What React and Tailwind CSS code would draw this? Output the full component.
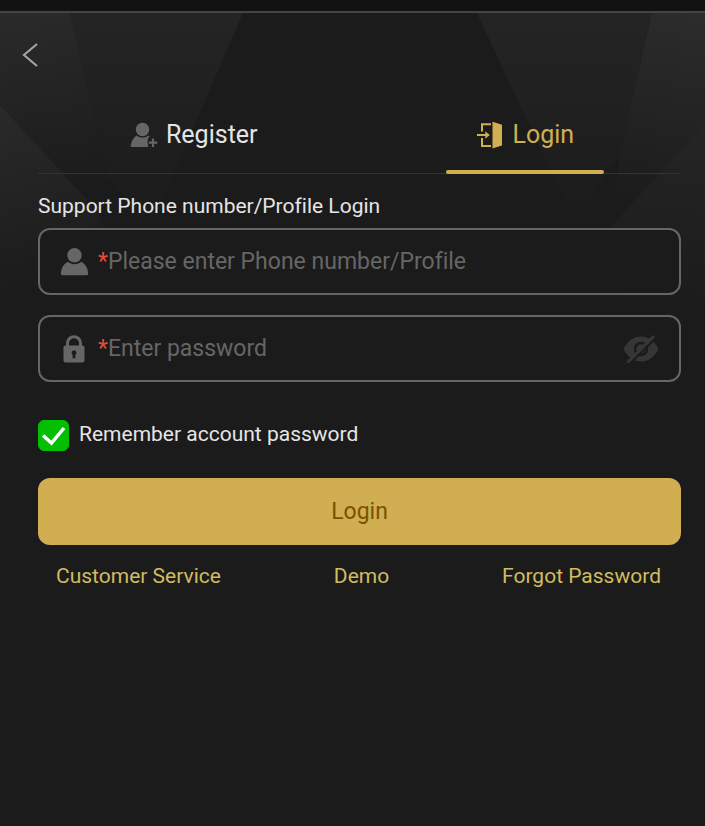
import React, { useState } from 'react';

const BackIcon = () => (
  <svg className="w-4 h-6" viewBox="0 0 16 24" fill="none" stroke="#a3a3a3" strokeWidth="2.2">
    <path d="M15 1L2 12l13 11" />
  </svg>
);

const RegisterIcon = () => (
  <svg className="w-7 h-7" viewBox="0 0 28 28" fill="#666666">
    <circle cx="12.5" cy="8.5" r="6.7" />
    <path d="M6.5 14.4c3.4 2.8 8.6 2.8 12 0l1.2 1.2c-1.6 1.4-2.3 3.2-2.2 5 .1 1.7.4 3.5.8 5.4H1.8c-.9 0-1.3-.6-1.1-1.5.6-4.300 2.500-7.600 5.800-10.100z" />
    <path d="M23 17.500v8.500M18.800 21.700h8.500" stroke="#666666" strokeWidth="2.200" />
  </svg>
);

const LoginIcon = () => (
  <svg className="w-7 h-7" viewBox="0 0 28 28">
    <path d="M15 3.200H6v7.300M6 17v8h9" fill="none" stroke="#d1ae52" strokeWidth="2" />
    <path d="M1 14h9" stroke="#d1ae52" strokeWidth="2" />
    <path d="M9.300 10.300l4.500 3.700-4.500 3.700z" fill="#d1ae52" />
    <path d="M16.500.8l9.500 3v20.800l-9.500 2.900z" fill="#d1ae52" />
  </svg>
);

const UserIcon = () => (
  <svg className="w-7 h-7 shrink-0" viewBox="0 0 28 28" fill="#666666">
    <circle cx="14.500" cy="7.300" r="7.200" />
    <path d="M7.600 13.800c4 3.200 9.800 3.200 13.800 0 4.200 2.600 6.500 6.400 6.700 11.400.1 1.300-.6 2-1.900 2H2.800c-1.300 0-2-.7-1.900-2 .2-5 2.500-8.800 6.700-11.400z" />
  </svg>
);

const LockIcon = () => (
  <svg className="w-7 h-7 shrink-0" viewBox="0 0 28 28">
    <path d="M7.500 12V8.200a6.500 6.500 0 0 1 13 0V12" fill="none" stroke="#666666" strokeWidth="3" />
    <rect x="3.500" y="10.500" width="21" height="17" rx="2" fill="#666666" />
    <path d="M14 15.200a2.500 2.500 0 0 1 1.400 4.500v3.600h-2.800v-3.600a2.500 2.500 0 0 1 1.400-4.500z" fill="#1b1b1b" />
  </svg>
);

const EyeIcon = ({ hidden }) => (
  <svg className="w-9 h-7" viewBox="0 0 36 28">
    <path d="M.5 14C5 5.500 10.700 1.500 18 1.500S31 5.500 35.500 14C31 22.500 25.300 26.500 18 26.500S5 22.500.5 14z" fill="#363636" />
    <circle cx="18" cy="14" r="6" fill="none" stroke="#1b1b1b" strokeWidth="2.500" />
    {hidden && (
      <>
        <path d="M7.500 28L33 3" stroke="#1b1b1b" strokeWidth="2" />
        <path d="M4.500 27.500L31 1" stroke="#363636" strokeWidth="3" />
      </>
    )}
  </svg>
);

// Faceted light beams behind the header
const Backdrop = () => (
  <svg
    className="absolute inset-x-0 top-0 w-full h-80"
    viewBox="0 0 705 320"
    preserveAspectRatio="none"
    aria-hidden="true"
  >
    <defs>
      <linearGradient id="beam" gradientUnits="userSpaceOnUse" x1="0" y1="0" x2="0" y2="215">
        <stop offset="0" stopColor="#242424" />
        <stop offset="1" stopColor="#1b1b1b" />
      </linearGradient>
      <linearGradient id="edgeLeft" gradientUnits="userSpaceOnUse" x1="30" y1="0" x2="60" y2="180">
        <stop offset="0" stopColor="#2a2a2a" />
        <stop offset="1" stopColor="#1b1b1b" />
      </linearGradient>
      <linearGradient id="lowLeft" gradientUnits="userSpaceOnUse" x1="0" y1="92" x2="60" y2="270">
        <stop offset="0" stopColor="#2a2a2a" />
        <stop offset="1" stopColor="#1b1b1b" />
      </linearGradient>
      <linearGradient id="edgeRight" gradientUnits="userSpaceOnUse" x1="690" y1="0" x2="650" y2="200">
        <stop offset="0" stopColor="#2c2c2c" />
        <stop offset="1" stopColor="#1b1b1b" />
      </linearGradient>
      <linearGradient id="lowRight" gradientUnits="userSpaceOnUse" x1="705" y1="110" x2="680" y2="300">
        <stop offset="0" stopColor="#252525" />
        <stop offset="1" stopColor="#1b1b1b" />
      </linearGradient>
    </defs>
    <path d="M0 0h70l38 165-10 34L0 92z" fill="url(#edgeLeft)" />
    <path d="M70 0h173l-92 212-43-47z" fill="url(#beam)" />
    <path d="M0 92l98 107L140 320H0z" fill="url(#lowLeft)" />
    <path d="M477 0h175l-32 140-45 70z" fill="url(#beam)" />
    <path d="M652 0h53v110L610 215l10-75z" fill="url(#edgeRight)" />
    <path d="M705 110v210H590l20-105z" fill="url(#lowRight)" />
  </svg>
);

const links = [
  { title: 'Customer Service', path: '#service' },
  { title: 'Demo', path: '#demo' },
  { title: 'Forgot Password', path: '#forgot' }
];

const App = () => {
  const [account, setAccount] = useState('');
  const [password, setPassword] = useState('');
  const [showPassword, setShowPassword] = useState(false);
  const [remember, setRemember] = useState(true);

  return (
    <div className="min-h-screen bg-[#1b1b1b] font-[Roboto,sans-serif] [font-variant-ligatures:none] text-[#e5e5e5]">
      <div className="h-[13px] bg-[#121212] border-b-2 border-[#444444]" />

      <div className="relative">
        <Backdrop />

        <div className="relative pl-[38px] pr-6">
          <button type="button" aria-label="Back" className="block -ml-4 pt-[30px]">
            <BackIcon />
          </button>

          {/* Tabs */}
          <div className="mt-9 grid grid-cols-2 gap-5 border-b border-[#333333]">
            <button type="button" className="flex items-center justify-center gap-2 h-[70px] pb-1.5 text-[25px] leading-8">
              <RegisterIcon />
              Register
            </button>
            <button
              type="button"
              className="flex flex-col h-[71px] -mb-px w-[158px] justify-self-center text-[25px] leading-8 text-[#d1ae52]"
            >
              <span className="flex-1 flex items-center justify-center gap-2 w-full pb-1">
                <LoginIcon />
                Login
              </span>
              <span className="w-full h-1 rounded-full bg-[#d1ae52]" />
            </button>
          </div>

          <form onSubmit={(e) => e.preventDefault()}>
            <label htmlFor="account" className="block pt-[18px] pb-2 text-[21px] leading-7">
              Support Phone number/Profile Login
            </label>
            <div className="flex items-center h-[67px] px-5 border-2 border-[#666666] rounded-xl bg-[#1b1b1b]">
              <UserIcon />
              <span className="ml-2.5 text-[23px] leading-8 text-[#e74c3c]">*</span>
              <input
                id="account"
                type="text"
                value={account}
                onChange={(e) => setAccount(e.target.value)}
                placeholder="Please enter Phone number/Profile"
                className="flex-1 min-w-0 bg-transparent outline-none text-[23px] leading-8 placeholder:text-[#666666]"
              />
            </div>

            <div className="mt-5 flex items-center h-[67px] px-5 border-2 border-[#666666] rounded-xl bg-[#1b1b1b]">
              <LockIcon />
              <span className="ml-2.5 text-[23px] leading-8 text-[#e74c3c]">*</span>
              <input
                type={showPassword ? 'text' : 'password'}
                aria-label="Password"
                value={password}
                onChange={(e) => setPassword(e.target.value)}
                placeholder="Enter password"
                className="flex-1 min-w-0 bg-transparent outline-none text-[23px] leading-8 placeholder:text-[#666666]"
              />
              <button type="button" aria-label="Toggle password" onClick={() => setShowPassword(!showPassword)}>
                <EyeIcon hidden={!showPassword} />
              </button>
            </div>

            <label className="mt-[38px] flex items-start w-fit text-[21px] leading-7">
              <span className="grid w-[31px] h-[31px]">
                <input
                  type="checkbox"
                  checked={remember}
                  onChange={(e) => setRemember(e.target.checked)}
                  className="peer col-start-1 row-start-1 appearance-none w-full h-full rounded-md border border-[#666666] checked:border-[#04be02] checked:bg-[#04be02]"
                />
                <svg
                  className="invisible peer-checked:visible col-start-1 row-start-1 pointer-events-none"
                  viewBox="0 0 31 31"
                  fill="none"
                  stroke="#ffffff"
                  strokeWidth="3.500"
                >
                  <path d="M5 15.500l8.500 7.500L26 8" />
                </svg>
              </span>
              <span className="ml-2.5">Remember account password</span>
            </label>

            <button
              type="submit"
              className="mt-[27px] w-full h-[67px] rounded-xl bg-[#d1ae52] text-[23px] leading-8 text-[#7a5200]"
            >
              Login
            </button>
          </form>

          <div className="mt-[17px] flex justify-between pl-[18px] pr-5 text-[21px] leading-7 text-[#d1bc60]">
            {links.map((link) => (
              <a key={link.title} href={link.path}>
                {link.title}
              </a>
            ))}
          </div>
        </div>
      </div>
    </div>
  );
};

export default App;
